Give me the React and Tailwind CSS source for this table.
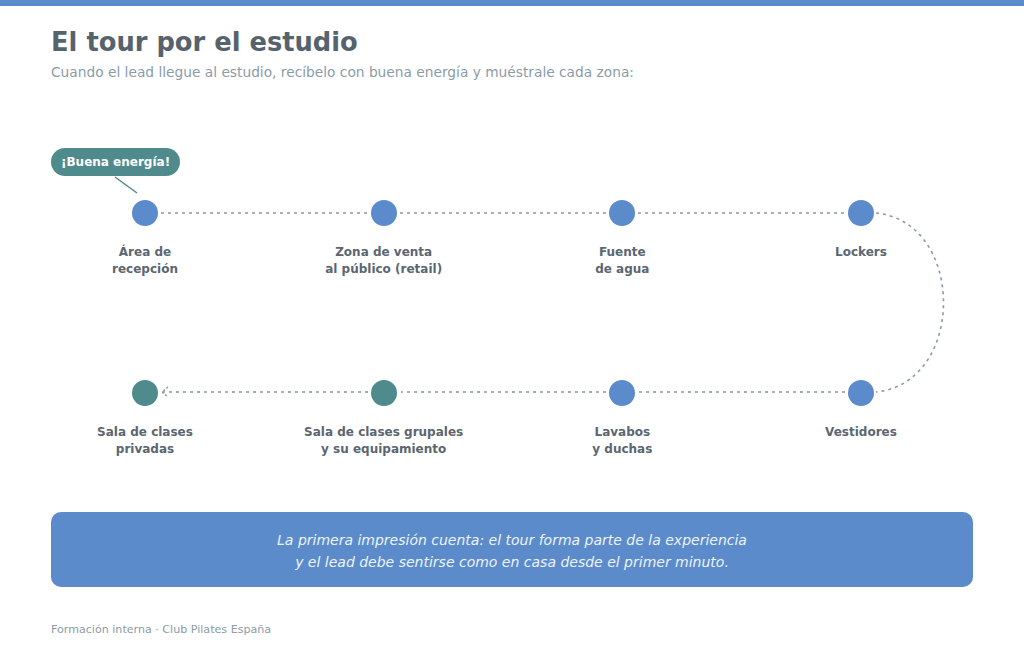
import React from "react";

const row1 = [
  { l1: "Área de", l2: "recepción", teal: false },
  { l1: "Zona de venta", l2: "al público (retail)", teal: false },
  { l1: "Fuente", l2: "de agua", teal: false },
  { l1: "Lockers", l2: "", teal: false },
];
const row2 = [
  { l1: "Sala de clases", l2: "privadas", teal: true },
  { l1: "Sala de clases grupales", l2: "y su equipamiento", teal: true },
  { l1: "Lavabos", l2: "y duchas", teal: false },
  { l1: "Vestidores", l2: "", teal: false },
];

function Node({ n, labelMt }) {
  return (
    <div className="flex flex-col items-center">
      <div
        className={
          "w-[26px] h-[26px] rounded-full " +
          (n.teal ? "bg-[#4f8b8c]" : "bg-[#5b8bca]")
        }
      />
      <div className={"text-center text-[12px] leading-[17px] font-bold text-[#5b6670] " + labelMt}>
        <div>{n.l1}</div>
        {n.l2 && <div>{n.l2}</div>}
      </div>
    </div>
  );
}

export default function App() {
  const xs = [94, 333, 571, 810];
  const y1 = 65;
  const y2 = 244;
  return (
    <div
      className="w-[1024px] h-[657px] bg-white overflow-hidden"
      style={{ fontFamily: '"DejaVu Sans", "Liberation Sans", sans-serif' }}
    >
      <div className="h-[6px] bg-[#5b8bca]" />
      <div className="px-[51px]">
        <h1 className="mt-[20px] text-[25.75px] leading-[32px] font-bold text-[#56636d]">
          El tour por el estudio
        </h1>
        <p className="mt-[4px] text-[13.75px] leading-[20px] text-[#8b9ba7]">
          Cuando el lead llegue al estudio, recíbelo con buena energía y muéstrale cada zona:
        </p>

        <div className="relative mt-[66px]">
          <svg
            className="absolute left-0 top-0 overflow-visible"
            width="922"
            height="310"
            viewBox="0 0 922 310"
            fill="none"
          >
            <line x1="64" y1="29" x2="86" y2="45" stroke="#4f8b8c" strokeWidth="1.5" />
            {[0, 1, 2].map((i) => (
              <line
                key={"a" + i}
                x1={xs[i] + 16}
                y1={y1}
                x2={xs[i + 1] - 16}
                y2={y1}
                stroke="#8c98a2"
                strokeWidth="1.6"
                strokeDasharray="3 4"
              />
            ))}
            {[0, 1, 2].map((i) => (
              <line
                key={"b" + i}
                x1={xs[i + 1] - 16}
                y1={y2}
                x2={xs[i] + 17}
                y2={y2}
                stroke="#8c98a2"
                strokeWidth="1.6"
                strokeDasharray="3 4"
              />
            ))}
            <polyline
              points={`${xs[0] + 23},${y2 - 5} ${xs[0] + 17},${y2} ${xs[0] + 23},${y2 + 5}`}
              stroke="#8c98a2"
              strokeWidth="1.6"
              strokeDasharray="2 2"
            />
            <path
              d={`M ${xs[3] + 15} ${y1} C 915 74, 915 235, ${xs[3] + 15} ${y2}`}
              stroke="#8c98a2"
              strokeWidth="1.6"
              strokeDasharray="3 4"
            />
          </svg>

          <div className="relative">
            <div className="inline-flex items-center h-[28px] px-[10px] rounded-full bg-[#4f8b8c] text-white text-[12px] font-bold">
              ¡Buena energía!
            </div>
            <div className="mt-[24px] ml-[4px] grid grid-cols-[repeat(4,180px)] gap-x-[58.67px]">
              {row1.map((n) => (
                <Node key={n.l1} n={n} labelMt="mt-[18px]" />
              ))}
            </div>
            <div className="mt-[102px] ml-[4px] grid grid-cols-[repeat(4,180px)] gap-x-[58.67px]">
              {row2.map((n) => (
                <Node key={n.l1} n={n} labelMt="mt-[18px]" />
              ))}
            </div>
          </div>
        </div>

        <div className="mt-[54px] h-[75px] rounded-[10px] bg-[#5b8bca] flex flex-col items-center justify-center text-[14px] leading-[22px] italic text-[#eef3fa]">
          <div className="translate-y-[1px]">La primera impresión cuenta: el tour forma parte de la experiencia</div>
          <div className="translate-y-[1px]">y el lead debe sentirse como en casa desde el primer minuto.</div>
        </div>

        <div className="mt-[35px] text-[11.1px] leading-[16px] text-[#8b9ba7]">
          Formación interna · Club Pilates España
        </div>
      </div>
    </div>
  );
}
